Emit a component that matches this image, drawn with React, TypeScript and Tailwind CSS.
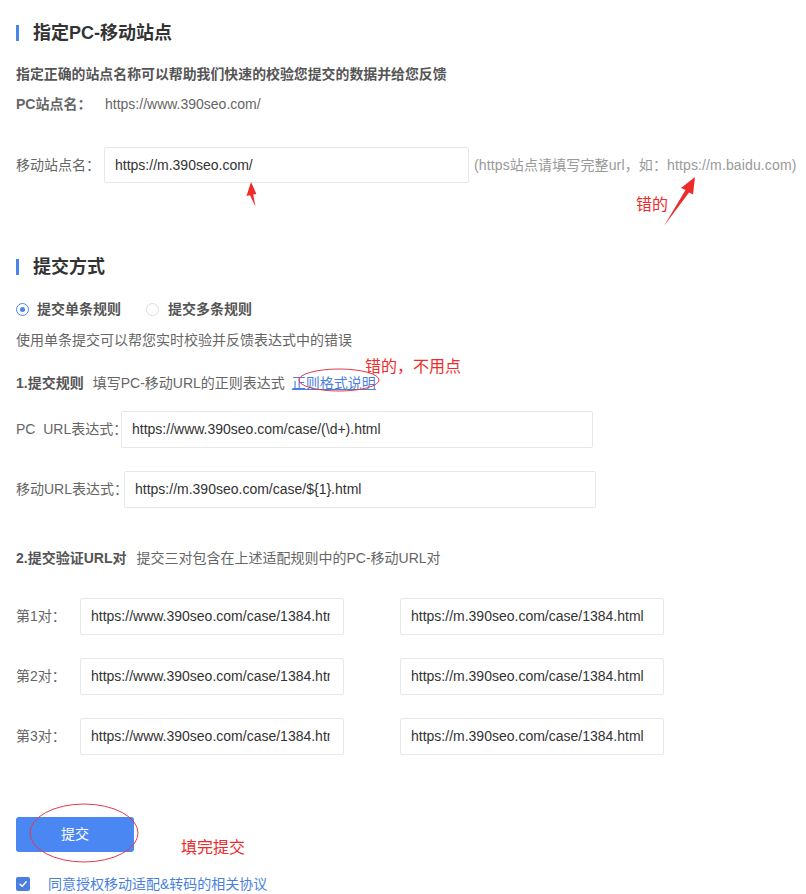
import React from "react";

const pairs = [1, 2, 3];

function SectionTitle({ children }: { children: React.ReactNode }) {
  return (
    <div className="flex items-center h-6">
      <span className="shrink-0 w-[3px] h-[16px] bg-[#4a86e8]" />
      <h2 className="ml-[14px] h-6 text-[18px] leading-6 font-bold text-[#333]">{children}</h2>
    </div>
  );
}

function Field({ value, className }: { value: string; className: string }) {
  return (
    <div
      className={`shrink-0 flex items-center border border-[#e8e8e8] rounded-[2px] bg-white text-[14px] text-[#333] ${className}`}
    >
      <span className="flex-1 min-w-0 overflow-hidden whitespace-nowrap">{value}</span>
    </div>
  );
}

function Radio({ checked }: { checked: boolean }) {
  return checked ? (
    <span className="shrink-0 w-[13px] h-[13px] rounded-full border border-[#4a86e8] flex items-center justify-center">
      <span className="w-[5px] h-[5px] rounded-full bg-[#4a86e8]" />
    </span>
  ) : (
    <span className="shrink-0 w-[13px] h-[13px] rounded-full border border-[#dcdcdc]" />
  );
}

export default function App() {
  return (
    <div
      className="relative w-[806px] h-[894px] bg-white overflow-hidden px-4 pt-[21px] text-[14px] text-[#666]"
      style={{ fontFamily: '"Liberation Sans", "Noto Sans CJK SC", sans-serif' }}
    >
      <SectionTitle>指定PC-移动站点</SectionTitle>
      <p className="mt-[19px] h-5 leading-5 font-bold text-[#555] text-[13.9px] whitespace-nowrap">
        指定正确的站点名称可以帮助我们快速的校验您提交的数据并给您反馈
      </p>
      <div className="mt-[10px] h-5 flex items-center leading-5">
        <span className="shrink-0 w-[89px] font-bold text-[#666]">PC站点名：</span>
        <span className="text-[#666]">https://www.390seo.com/</span>
      </div>
      <div className="mt-[33px] h-[36px] flex items-center">
        <span className="shrink-0 w-[88px]">移动站点名：</span>
        <Field value="https://m.390seo.com/" className="w-[365px] h-[36px] pl-[10px]" />
        <span className="ml-[5px] whitespace-nowrap tracking-[0.13px] text-[#999]">
          (https站点请填写完整url，如：https://m.baidu.com)
        </span>
      </div>

      <div className="mt-[72px]">
        <SectionTitle>提交方式</SectionTitle>
      </div>
      <div className="mt-[20px] h-5 flex items-center leading-5">
        <Radio checked />
        <span className="ml-[8px] font-bold text-[#555]">提交单条规则</span>
        <span className="ml-[25px] flex">
          <Radio checked={false} />
        </span>
        <span className="ml-[9px] font-bold text-[#555]">提交多条规则</span>
      </div>
      <p className="mt-[11px] h-5 leading-5 whitespace-nowrap">使用单条提交可以帮您实时校验并反馈表达式中的错误</p>
      <div className="mt-[23px] h-5 flex items-center leading-5">
        <span className="font-bold text-[#555]">1.提交规则</span>
        <span className="ml-[9px]">填写PC-移动URL的正则表达式</span>
        <span className="ml-[7px] text-[#4a7fe0] underline">正则格式说明</span>
      </div>
      <div className="mt-[18px] h-[37px] flex items-center">
        <span className="shrink-0 w-[105px] whitespace-pre">PC  URL表达式：</span>
        <Field value="https://www.390seo.com/case/(\d+).html" className="w-[472px] h-[37px] pl-[10px]" />
      </div>
      <div className="mt-[23px] h-[37px] flex items-center">
        <span className="shrink-0 w-[108px] whitespace-nowrap">移动URL表达式：</span>
        <Field value="https://m.390seo.com/case/${1}.html" className="w-[472px] h-[37px] pl-[10px]" />
      </div>

      <div className="mt-[40px] h-5 flex items-center leading-5">
        <span className="font-bold text-[#555]">2.提交验证URL对</span>
        <span className="ml-[10px]">提交三对包含在上述适配规则中的PC-移动URL对</span>
      </div>
      <div className="mt-[30px] flex flex-col gap-[23px]">
        {pairs.map((n) => (
          <div key={n} className="h-[37px] flex items-center">
            <span className="shrink-0 w-[64px]">第{n}对：</span>
            <Field value="https://www.390seo.com/case/1384.html" className="w-[264px] h-[37px] pl-[10px] pr-[13px]" />
            <Field value="https://m.390seo.com/case/1384.html" className="ml-[56px] w-[264px] h-[37px] pl-[10px]" />
          </div>
        ))}
      </div>

      <button className="mt-[62px] w-[118px] h-[35px] rounded-[3px] bg-[#4a87f3] text-white text-[14px] flex items-center justify-center">
        提交
      </button>
      <div className="mt-[22px] h-5 flex items-center leading-5">
        <span className="shrink-0 w-[14px] h-[14px] rounded-[2px] bg-[#4a7fe0] flex items-center justify-center">
          <svg width="10" height="10" viewBox="0 0 10 10" fill="none">
            <path d="M2 5.2 4.2 7.3 8.2 2.8" stroke="white" strokeWidth="1.4" strokeLinecap="round" strokeLinejoin="round" />
          </svg>
        </span>
        <span className="ml-[18px] text-[#4a7fe0]">同意授权移动适配&转码的相关协议</span>
      </div>

      {/* red markup layered over the form */}
      <svg className="absolute inset-0 pointer-events-none" width="806" height="894" viewBox="0 0 806 894" fill="none">
        <path d="M251 182 L246.5 196 L250 195.3 L255.5 206.5 L253.2 194.6 L256.4 194 Z" fill="#ee2b2b" />
        <path d="M695 177 L681 188 L685.5 190 L664 226 L689 192.5 L693 194.5 Z" fill="#ee2b2b" />
        <ellipse cx="339" cy="380" rx="40" ry="11" stroke="#e23a4a" strokeWidth="1" />
        <ellipse cx="84" cy="833" rx="54" ry="29" stroke="#e23a4a" strokeWidth="1" />
      </svg>
      <span className="absolute left-[636px] top-[195px] text-[16px] leading-5 text-[#ee2b2b]">错的</span>
      <span className="absolute left-[365px] top-[357px] text-[16px] leading-5 text-[#ee2b2b]">错的，不用点</span>
      <span className="absolute left-[181px] top-[838px] text-[16px] leading-5 text-[#ee2b2b]">填完提交</span>
    </div>
  );
}
